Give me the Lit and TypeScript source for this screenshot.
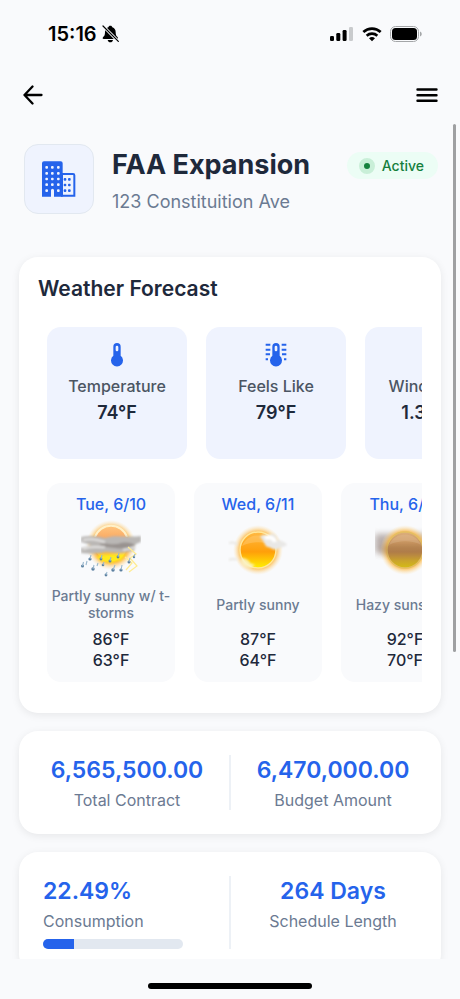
import { LitElement, html, css, svg } from "lit";
import { customElement, property } from "lit/decorators.js";

const bellOff = html`<svg class="bell" width="17" height="18" viewBox="0 0 51 54" aria-label="Silent mode" role="img">
  <path d="M25 2c-4 0-5 2-6 5-7 2-10 8-10 15 0 9-2 11-6 15-2 3-1 5 2 5h40c3 0 4-2 2-5-4-4-6-6-6-15 0-7-3-13-10-15-1-3-2-5-6-5z" fill="#000"/>
  <path d="M17 45h16c-1 4-4 7-8 7s-7-3-8-7z" fill="#000"/>
  <path d="M3 3l46 46" stroke="#f9fafc" stroke-width="9"/>
  <path d="M3 3l46 46" stroke="#000" stroke-width="3.600" stroke-linecap="round"/>
</svg>`;

const signal = html`<svg width="24" height="16" viewBox="0 0 24 16" aria-hidden="true">
  <rect x="0" y="10" width="4" height="5" rx="1.3"/>
  <rect x="6.300" y="7" width="4" height="8" rx="1.3"/>
  <rect x="12.600" y="4" width="4" height="11" rx="1.3"/>
  <rect x="19" y="1" width="4" height="14" rx="1.3" fill="#c9cbcd"/>
</svg>`;

const wifi = html`<svg width="20" height="16" viewBox="0 0 60 48" aria-hidden="true">
  <g fill="none" stroke="#000" stroke-width="8">
    <path d="M4 18a38 38 0 0 1 52 0"/>
    <path d="M14 29a24 24 0 0 1 32 0"/>
  </g>
  <path d="M21 37a14 14 0 0 1 18 0L30 46z"/>
</svg>`;

const battery = html`<svg width="33" height="16" viewBox="0 0 33 16" aria-hidden="true">
  <rect x="0.5" y="0.5" width="28" height="15" rx="5" fill="none" stroke="#a4a6a8"/>
  <rect x="2" y="2" width="25" height="12" rx="3.5"/>
  <path d="M30 5.5c2.3.8 2.3 4.2 0 5z" fill="#a4a6a8"/>
</svg>`;

const backArrow = html`<svg width="20" height="20" viewBox="0 0 20 20" aria-hidden="true">
  <path d="M9.500 1.500L1.500 10l8 8.500M1.500 10h17" fill="none" stroke="#000" stroke-width="2.300" stroke-linecap="round" stroke-linejoin="round"/>
</svg>`;

const menuIcon = html`<svg width="22" height="16" viewBox="0 0 22 16" aria-hidden="true">
  <path d="M1.500 2.500h19M1.500 8.200h19M1.500 13.800h19" stroke="#000" stroke-width="2.400" stroke-linecap="round"/>
</svg>`;

const dots = (xs: number[], ys: number[], fill: string) =>
  ys.map((y) => xs.map((x) => svg`<rect x=${x - 4} y=${y - 4} width="8" height="8" rx="3" fill=${fill}/>`));

const building = html`<svg width="34" height="36" viewBox="0 0 102 108" aria-hidden="true">
  <path d="M0 7a6 6 0 0 1 6-6h50a6 6 0 0 1 6 6v100H36V88a4.500 4.500 0 0 0-9 0v19H0z" fill="#2563eb"/>
  <path d="M60 39h33a4 4 0 0 1 4 4v61H60z" fill="#eff3fe" stroke="#2563eb" stroke-width="6"/>
  ${dots([14, 31, 49], [19, 37, 54, 71], "#eff3fe")}
  ${dots([14, 49], [89], "#eff3fe")}
  ${dots([69, 82], [55, 72, 89], "#2563eb")}
</svg>`;

const thermometer = (heat: boolean) => html`<svg width="26" height="26" viewBox="0 0 78 78" aria-hidden="true">
  <path d="M28 14a11 11 0 0 1 22 0v27a18 18 0 1 1-22 0z" fill="#2563eb"/>
  <rect x="35" y="11" width="8" height="17" rx="4" fill="#eff3fe"/>
  ${heat
    ? svg`<path d="M8 8h14M8 23h14M8 37h13M56 8h14M56 23h14M57 37h13M8 52h7M63 52h7" stroke="#2563eb" stroke-width="6"/>`
    : ""}
</svg>`;

const windIcon = html`<svg width="26" height="26" viewBox="0 0 26 26" aria-hidden="true">
  <path d="M3 10h12a3 3 0 1 0-3-3M3 14h17a3 3 0 1 1-3 3M3 18h9" fill="none" stroke="#2563eb" stroke-width="2" stroke-linecap="round"/>
</svg>`;

const sunDefs = (id: string, stops: string[]) => svg`
  <radialGradient id=${id + "h"}>
    <stop offset="0.64" stop-color="#fb9a1c"/>
    <stop offset="0.76" stop-color="#fdba4a" stop-opacity="0.75"/>
    <stop offset="1" stop-color="#fde3b0" stop-opacity="0"/>
  </radialGradient>
  <linearGradient id=${id + "c"} x1="0" y1="0" x2="0" y2="1">
    <stop offset="0" stop-color=${stops[0]}/>
    <stop offset="0.55" stop-color=${stops[1]}/>
    <stop offset="1" stop-color=${stops[2]}/>
  </linearGradient>
  <filter id=${id + "b"} x="-30%" y="-50%" width="160%" height="200%"><feGaussianBlur stdDeviation="1.3"/></filter>
  <filter id=${id + "w"} x="-50%" y="-50%" width="200%" height="200%"><feGaussianBlur stdDeviation="3"/></filter>`;

const storms = html`<svg width="60" height="60" viewBox="0 0 60 60" role="img" aria-label="Partly sunny with thunderstorms">
  <defs>${sunDefs("s", ["#ffc27c", "#f79a52", "#ffe61a"])}</defs>
  <circle cx="30" cy="26" r="25" fill="url(#sh)"/>
  <circle cx="30" cy="25" r="17" fill="url(#sc)"/>
  <path d="M14 18a17 17 0 0 1 32 0" fill="none" stroke="#fff0c8" stroke-width="2"/>
  <g filter="url(#sb)">
    <path d="M0 18c8-2 17-1 24 1 10-4 22 0 36-2v6c-6 2-8 4-6 8-12 4-21 3-29 2-8 2-17 2-25 1v-5l10-3-10-3z" fill="#bab7b5"/>
    <path d="M18 25c8-2 14 2 22-1 7-1 11 0 14 2-7 4-14 4-20 3-6-1-11 0-16-4z" fill="#98928f"/>
    <path d="M2 21c9-2 15 0 22 2M2 30c10-4 14-1 22-2M42 31l13-3" stroke="#e3e2e1" stroke-width="2" fill="none"/>
    <path d="M15 37l28-2 3-1-6 7-10 3-10-2z" fill="#ffea1f"/>
  </g>
  <path d="M47 28l8 7-6 4 7 8-8 6M44 38l7 6-6 7" fill="none" stroke="#ffeb91" stroke-width="1.2"/>
  <g fill="#5b7f9f">
    <circle cx="9" cy="40" r="1.600"/><circle cx="1.500" cy="47" r="1.500"/><circle cx="12" cy="50" r="1.700"/>
    <circle cx="20" cy="40" r="1.400"/><circle cx="25" cy="56" r="1.400"/><circle cx="29" cy="42" r="1.500"/>
    <circle cx="32" cy="51" r="1.700"/><circle cx="37" cy="38" r="1.400"/><circle cx="40" cy="51" r="1.600"/>
    <circle cx="48" cy="43" r="1.500"/><circle cx="22" cy="46" r="1.300"/><circle cx="53" cy="38" r="1.200"/>
  </g>
  <path d="M9 40l1-4M1.500 47l1-4M12 50l1-4M20 40l1-4M25 56l1-3M29 42l1-4M32 51l2-5M37 38l1-4M40 51l1-5M48 43l1-4M22 46l1-3M53 38l1-3M6 42l-1 4M17 44l-1 3" stroke="#9ab8ce" stroke-width="1.100"/>
</svg>`;

const partly = html`<svg width="60" height="60" viewBox="0 0 60 60" role="img" aria-label="Partly sunny">
  <defs>${sunDefs("p", ["#ffb944", "#ff9f0a", "#fff000"])}</defs>
  <circle cx="30" cy="31" r="25" fill="url(#ph)"/>
  <circle cx="30" cy="31" r="18" fill="url(#pc)" stroke="#ffe79a" stroke-width="1.5"/>
  <path d="M14 27c6-14 26-14 32 0-8-5-23-5-32 0z" fill="#ffcf80" opacity="0.400"/>
  <g filter="url(#pb)">
    <path d="M32 18c2-3 6-2 8-2 5-3 9 0 9 5 3 0 9 2 10 5-3 2-7 2-9 4-5 2-7-2-10-2-3 0-3-5-8-10z" fill="#e9e8e6"/>
    <path d="M37 19c4-2 9 0 10 4" stroke="#fff" stroke-width="4" fill="none"/>
    <path d="M1 24c4-1 7 0 8 2M1 41c4-2 5 0 8-1" stroke="#e9e8e4" stroke-width="2" fill="none"/>
    <path d="M13 39c4 0 8 2 9 5l5 2-4 3c-7 0-11-4-10-10z" fill="#fbf3c8" opacity="0.9"/>
  </g>
</svg>`;

const hazy = html`<svg width="60" height="60" viewBox="0 0 60 60" role="img" aria-label="Hazy sunshine">
  <defs>${sunDefs("z", ["#dcae7c", "#bb834a", "#d5bd14"])}</defs>
  <path d="M0 15h52v19H0z" fill="#8d7c76" opacity="0.6" filter="url(#zw)"/>
  <circle cx="30" cy="31" r="25" fill="url(#zh)"/>
  <circle cx="30" cy="31" r="18" fill="url(#zc)" stroke="#e3be63" stroke-width="1.5"/>
  <path d="M14 26c6-14 26-14 32 0-8-5-23-5-32 0z" fill="#e0bc93" opacity="0.4"/>
  <path d="M6 26h44v10H6z" fill="#9a7148" opacity="0.4" filter="url(#zw)"/>
</svg>`;

const metrics = [
  { icon: thermometer(false), label: "Temperature", value: "74°F" },
  { icon: thermometer(true), label: "Feels Like", value: "79°F" },
  { icon: windIcon, label: "Wind Speed", value: "1.3 mph" },
];

const days = [
  { date: "Tue, 6/10", icon: storms, text: "Partly sunny w/ t-storms", high: "86°F", low: "63°F" },
  { date: "Wed, 6/11", icon: partly, text: "Partly sunny", high: "87°F", low: "64°F" },
  { date: "Thu, 6/12", icon: hazy, text: "Hazy sunshine", high: "92°F", low: "70°F" },
];

@customElement("stat-item")
class StatItem extends LitElement {
  @property() value = "";
  @property() label = "";
  @property({ type: Number }) progress = -1;

  static styles = css`
    :host { display: flex; flex-direction: column; align-items: center; flex: 1; min-width: 0; }
    :host([start]) { align-items: flex-start; }
    .value { font-size: 23px; line-height: 30px; font-weight: 600; color: #2563eb; white-space: nowrap; }
    .label { font-size: 16px; line-height: 20px; margin-top: 5px; color: #6b7a92; }
    .track { align-self: stretch; height: 10px; margin: 8px 28px 0 0; border-radius: 5px; background: #e2e8f0; overflow: hidden; }
    .fill { height: 100%; background: #2563eb; }
  `;

  render() {
    return html`
      <div class="value">${this.value}</div>
      <div class="label">${this.label}</div>
      ${this.progress >= 0
        ? html`<div class="track" role="progressbar" aria-label=${this.label} aria-valuenow=${this.progress}>
            <div class="fill" style="width: ${this.progress}%"></div>
          </div>`
        : ""}
    `;
  }
}

@customElement("app-root")
class AppRoot extends LitElement {
  static styles = css`
    * { box-sizing: border-box; }
    :host {
      display: flex; flex-direction: column; position: relative;
      height: 100vh; overflow: hidden; background: #f9fafc; color: #1e293b;
      font-family: Inter, "Liberation Sans", sans-serif;
    }
    svg { display: block; flex: none; }
    h1, h2, p { margin: 0; }
    .status { display: flex; align-items: center; flex: none; height: 68px; padding: 0 37px 0 48px; gap: 5px; color: #000; }
    .time { font-size: 20px; line-height: 24px; font-weight: 600; }
    .radios { display: flex; align-items: center; gap: 8px; margin-left: auto; }
    nav { display: flex; justify-content: space-between; align-items: center; flex: none; height: 54px; padding: 0 16px; }
    nav button { display: grid; place-items: center; width: 34px; height: 40px; padding: 0; border: 0; background: none; }
    main { flex: 1; min-height: 0; overflow: auto; scrollbar-width: none; padding: 22px 19px; }
    .project { display: flex; gap: 18px; padding: 0 3px 0 5px; margin-bottom: 43px; }
    .logo { display: grid; place-items: center; flex: none; width: 70px; height: 70px; border: 1px solid #e2e8f0; border-radius: 14px; background: #eff3fe; }
    .names { flex: 1; min-width: 0; }
    h1 { font-size: 27px; line-height: 36px; font-weight: 650; margin-top: 3px; white-space: nowrap; }
    .address { font-size: 18px; line-height: 24px; margin-top: 7px; color: #6b7a92; white-space: nowrap; }
    .badge { display: flex; align-items: center; gap: 7px; height: 27px; margin-top: 8px; padding: 0 14px 0 12px; border-radius: 14px; background: #ecfdf5; color: #15803d; font-size: 14px; font-weight: 500; }
    .dot { width: 16px; height: 16px; border: 5px solid #c9efd8; border-radius: 50%; background: #15803d; }
    .card { background: #fff; border-radius: 19px; box-shadow: 0 2px 9px rgba(0, 0, 0, 0.08); margin-bottom: 18px; }
    .weather { padding: 19px 19px 31px; }
    h2 { font-size: 21px; line-height: 26px; font-weight: 600; }
    .row { display: flex; gap: 19px; overflow-x: auto; scrollbar-width: none; padding: 0 9px; }
    .metrics { margin-top: 25px; }
    .metric { display: flex; flex-direction: column; align-items: center; flex: none; width: 140px; height: 132px; padding-top: 15px; border-radius: 14px; background: #eff3fe; }
    .metric-label { font-size: 16px; line-height: 20px; margin-top: 8px; font-weight: 500; color: #4b5563; }
    .metric-value { font-size: 18px; line-height: 24px; margin-top: 5px; font-weight: 600; }
    .days { margin-top: 24px; }
    .day { display: flex; flex-direction: column; align-items: center; flex: none; width: 128px; height: 199px; padding-top: 10px; border-radius: 14px; background: #f9fafc; }
    .date { font-size: 16px; line-height: 22px; font-weight: 500; color: #2563eb; }
    .day svg { margin-top: 4px; }
    .text { display: grid; place-items: center; height: 34px; margin-top: 8px; padding: 0 4px; font-size: 14px; line-height: 17px; font-weight: 500; color: #6b7a92; text-align: center; }
    .temps { margin-top: 8px; font-size: 16px; line-height: 21px; font-weight: 500; text-align: center; }
    .stats { display: flex; gap: 18px; padding: 24px; }
    .divider { width: 2px; background: #edf1f6; }
    .home { flex: none; display: flex; justify-content: center; height: 40px; padding-top: 24px; }
    .home span { width: 164px; height: 6px; border-radius: 3px; background: #000; }
    .thumb { position: absolute; top: 124px; right: 4px; width: 3px; height: 528px; border-radius: 2px; background: #9fa0a2; }
  `;

  render() {
    return html`
      <div class="status">
        <span class="time">15:16</span>${bellOff}
        <div class="radios">${signal}${wifi}${battery}</div>
      </div>
      <nav>
        <button aria-label="Back">${backArrow}</button>
        <button aria-label="Menu">${menuIcon}</button>
      </nav>
      <main>
        <header class="project">
          <div class="logo">${building}</div>
          <div class="names">
            <h1>FAA Expansion</h1>
            <p class="address">123 Constituition Ave</p>
          </div>
          <div class="badge"><span class="dot"></span>Active</div>
        </header>
        <section class="card weather">
          <h2>Weather Forecast</h2>
          <div class="row metrics">
            ${metrics.map((m) => html`<div class="metric">
              ${m.icon}
              <div class="metric-label">${m.label}</div>
              <div class="metric-value">${m.value}</div>
            </div>`)}
          </div>
          <div class="row days">
            ${days.map((d) => html`<div class="day">
              <div class="date">${d.date}</div>
              ${d.icon}
              <div class="text">${d.text}</div>
              <div class="temps"><div>${d.high}</div><div>${d.low}</div></div>
            </div>`)}
          </div>
        </section>
        <section class="card stats">
          <stat-item value="6,565,500.00" label="Total Contract"></stat-item>
          <div class="divider"></div>
          <stat-item value="6,470,000.00" label="Budget Amount"></stat-item>
        </section>
        <section class="card stats">
          <stat-item start value="22.49%" label="Consumption" .progress=${22.49}></stat-item>
          <div class="divider"></div>
          <stat-item value="264 Days" label="Schedule Length"></stat-item>
        </section>
      </main>
      <div class="home"><span></span></div>
      <div class="thumb"></div>
    `;
  }
}
